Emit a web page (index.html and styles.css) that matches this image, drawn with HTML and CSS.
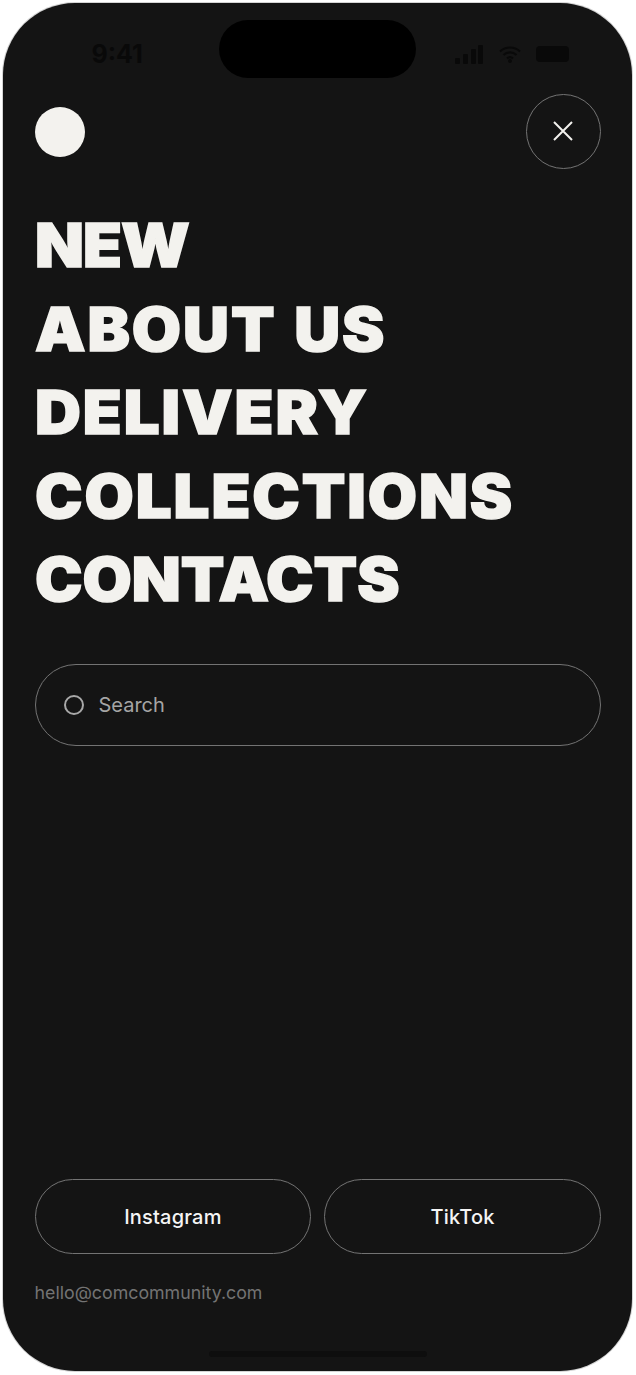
FILE: index.html
```html
<!DOCTYPE html>
<html lang="en">
<head>
  <meta charset="UTF-8" />
  <title>Menu</title>
  <link rel="stylesheet" href="styles.css">
</head>
<body>
  <div class="screen">
    <div class="status">
      <span class="time">9:41</span>
      <div class="island"></div>
      <div class="status-icons">
        <svg width="29" height="19" viewBox="0 0 29 19"><rect x="0" y="13" width="5" height="6" rx="1"/><rect x="8" y="9" width="5" height="10" rx="1"/><rect x="16" y="4" width="5" height="15" rx="1"/><rect x="23" y="0" width="5" height="19" rx="1"/></svg>
        <svg width="22" height="18" viewBox="0 0 22 18"><path d="M1 6.5a14.5 14.5 0 0 1 20 0M4.5 10a9.5 9.5 0 0 1 13 0M8 13.4a4.5 4.5 0 0 1 6 0" fill="none" stroke="#090909" stroke-width="2.2"/><circle cx="11" cy="16" r="2"/></svg>
        <div class="battery"></div>
      </div>
    </div>

    <div class="top">
      <div class="logo"></div>
      <button class="close">
        <svg class="close-x" width="20" height="20" viewBox="0 0 20 20"><path d="M1 1l18 18M19 1L1 19" fill="none" stroke="#f3f2ee" stroke-width="2"/></svg>
      </button>
    </div>

    <nav class="menu">
      <a class="tighter">NEW</a>
      <a>ABOUT US</a>
      <a>DELIVERY</a>
      <a>COLLECTIONS</a>
      <a class="tight">CONTACTS</a>
    </nav>

    <div class="search">
      <span class="search-icon"></span>
      <span>Search</span>
    </div>

    <div class="bottom">
      <div class="socials">
        <a class="social">Instagram</a>
        <a class="social">TikTok</a>
      </div>
      <p class="mail">hello@comcommunity.com</p>
    </div>

    <div class="home"></div>
  </div>
</body>
</html>
```
FILE: styles.css
```css
* {
  box-sizing: border-box;
}

body {
  margin: 0;
  padding: 3px 3px 4px 3px;
  height: 1375px;
  background-color: #fff;
  font-family: Inter, sans-serif;
  overflow: hidden;
}

.screen {
  display: flex;
  flex-direction: column;
  width: 629px;
  height: 1368px;
  padding: 17px 31px 14px 31.5px;
  background-color: #141414;
  border-radius: 72px;
  box-shadow: 0 0 0 1px #d4d4d4;
}

.status {
  display: flex;
  align-items: center;
  justify-content: space-between;
  height: 58px;
}

.time {
  width: 150px;
  padding-top: 10px;
  padding-left: 57px;
  font-size: 25px;
  font-weight: 700;
  color: #090909;
}

.island {
  width: 197px;
  height: 58px;
  background-color: #000;
  border-radius: 29px;
}

.status-icons {
  display: flex;
  align-items: center;
  gap: 15px;
  width: 150px;
  padding-top: 10px;
  padding-left: 4px;
  fill: #090909;
}

.battery {
  width: 33px;
  height: 16px;
  background-color: #090909;
  border-radius: 4px;
}

.top {
  display: flex;
  align-items: center;
  justify-content: space-between;
  margin-top: 16px;
}

.logo {
  width: 50px;
  height: 50px;
  background-color: #f3f2ee;
  border-radius: 50%;
}

.close {
  display: flex;
  align-items: center;
  justify-content: center;
  width: 75px;
  height: 75px;
  padding: 0;
  background: none;
  border: 1.5px solid #737373;
  border-radius: 50%;
}

.close-x {
  margin: 0 1px 1px 0;
}

.menu {
  display: flex;
  flex-direction: column;
  margin-top: 35px;
}

.menu a {
  font-size: 60px;
  line-height: 83.5px;
  font-weight: 900;
  letter-spacing: 1.8px;
  word-spacing: 3px;
  color: #f3f2ee;
  -webkit-text-stroke: 1.5px #f3f2ee;
  transform: scaleX(1.06);
  transform-origin: left;
}

.menu .tight {
  letter-spacing: 0;
}

.menu .tighter {
  letter-spacing: -0.9px;
}

.search {
  display: flex;
  align-items: center;
  gap: 15px;
  height: 82px;
  margin-top: 42px;
  padding-left: 28px;
  border: 1.5px solid #737373;
  border-radius: 41px;
  font-size: 20px;
  color: #a5a5a5;
}

.search-icon {
  width: 20px;
  height: 20px;
  border: 2px solid #a8a8a8;
  border-radius: 50%;
}

.bottom {
  margin-top: auto;
}

.socials {
  display: flex;
  gap: 13px;
}

.social {
  display: flex;
  flex: 1;
  align-items: center;
  justify-content: center;
  height: 75px;
  border: 1.5px solid #737373;
  border-radius: 38px;
  font-size: 20px;
  font-weight: 500;
  letter-spacing: 0.2px;
  color: #f5f5f5;
}

.mail {
  margin: 27px 0 46px 0;
  font-size: 17.8px;
  line-height: 24px;
  color: #737373;
}

.home {
  align-self: center;
  width: 218px;
  height: 6px;
  background-color: #0e0e0e;
  border-radius: 3px;
}
```
